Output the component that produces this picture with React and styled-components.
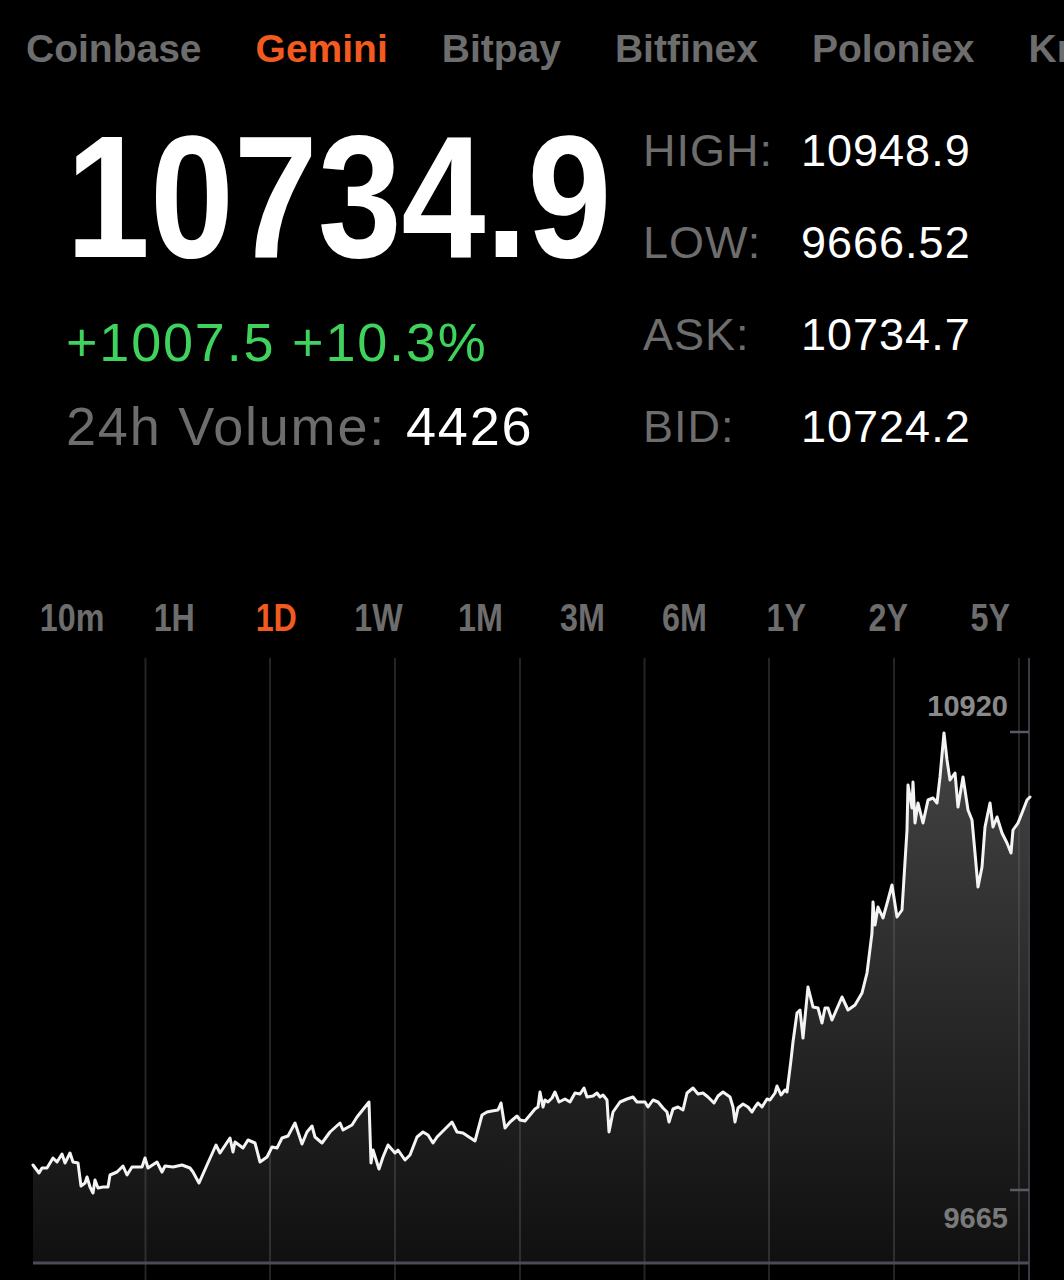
import React from 'react';
import styled, { createGlobalStyle } from 'styled-components';

const GlobalStyle = createGlobalStyle`
    html, body {
        margin: 0;
        padding: 0;
        background: #000;
    }
    body {
        font-family: "Liberation Sans", Arial, sans-serif;
        overflow: hidden;
    }
`;

const ORANGE = '#f25a1f';
const GRAY = '#6d6d6d';

const Page = styled.div`
    width: 1064px;
    height: 1280px;
    background: #000;
    overflow: hidden;
`;

const Exchanges = styled.div`
    display: flex;
    gap: 54px;
    padding: 24px 0 0 26px;
    white-space: nowrap;
    overflow: hidden;
`;

const Exchange = styled.div`
    font-size: 39px;
    line-height: 50px;
    font-weight: 700;
    color: ${p => (p.$active ? ORANGE : GRAY)};
`;

const Header = styled.div`
    display: grid;
    grid-template-columns: 577px 1fr;
    padding: 31px 0 0 66px;
`;

const Left = styled.div`
    padding-top: 4px;
`;

const Price = styled.div`
    font-size: 175px;
    line-height: 175px;
    font-weight: 700;
    color: #fff;
    margin-left: 0;
    transform: scaleX(0.862);
    transform-origin: left center;
    white-space: nowrap;
`;

const Line = styled.div`
    font-size: 54px;
    line-height: 84px;
    letter-spacing: 1.8px;
    white-space: nowrap;
    color: ${p => p.$color || GRAY};
`;

const Change = styled(Line)`
    margin-top: 16px;
`;

const Value = styled.span`
    color: #fff;
    margin-left: 20px;
`;

const Stats = styled.div`
    display: grid;
    grid-template-columns: 158px auto;
    grid-auto-rows: 92px;
    align-items: start;
    font-size: 45px;
    line-height: 92px;
    letter-spacing: 1px;
`;

const StatLabel = styled.div`
    color: ${GRAY};
`;

const StatValue = styled.div`
    color: #fff;
`;

const Ranges = styled.div`
    display: grid;
    grid-template-columns: repeat(10, 102px);
    margin: 115px 0 0 21px;
`;

const Range = styled.div`
    display: flex;
    justify-content: center;
    font-size: 38px;
    line-height: 60px;
    font-weight: 700;
    color: ${p => (p.$active ? ORANGE : GRAY)};
`;

const Narrow = styled.span`
    display: inline-block;
    transform: scaleX(0.85);
`;

const ChartBox = styled.div`
    margin-top: 10px;
    height: 622px;
`;

const exchanges = ['Coinbase', 'Gemini', 'Bitpay', 'Bitfinex', 'Poloniex', 'Kraken'];
const ranges = ['10m', '1H', '1D', '1W', '1M', '3M', '6M', '1Y', '2Y', '5Y'];
const stats = [
    ['HIGH:', '10948.9'],
    ['LOW:', '9666.52'],
    ['ASK:', '10734.7'],
    ['BID:', '10724.2'],
];

// traced from the 1D chart, page coordinates
const points = [
    [33,1165],[39,1173],[42,1168],[47,1168],[53,1158],[57,1162],[62,1154],[65,1163],[70,1153],[73,1162],
    [78,1163],[81,1186],[85,1183],[87,1177],[90,1187],[93,1193],[95,1180],[98,1188],[103,1187],[108,1187],
    [110,1175],[117,1172],[123,1166],[127,1175],[132,1167],[142,1167],[145,1158],[148,1168],[157,1162],
    [162,1172],[165,1166],[173,1167],[182,1165],[190,1168],[193,1172],[199,1183],[207,1165],[216,1145],
    [220,1153],[230,1138],[233,1152],[235,1142],[243,1148],[248,1140],[255,1143],[260,1162],[267,1157],
    [272,1147],[277,1148],[282,1138],[288,1136],[295,1123],[302,1144],[307,1132],[312,1126],[315,1137],
    [322,1143],[330,1132],[340,1123],[343,1130],[352,1125],[357,1117],[369,1102],[371,1163],[373,1150],
    [379,1169],[383,1157],[388,1145],[395,1153],[398,1150],[405,1160],[410,1155],[417,1137],[423,1132],
    [428,1135],[433,1143],[437,1137],[452,1122],[457,1132],[463,1133],[475,1141],[482,1115],[487,1112],
    [492,1111],[498,1110],[501,1103],[505,1128],[510,1122],[517,1116],[520,1120],[525,1121],[530,1115],
    [535,1109],[538,1107],[540,1092],[543,1107],[545,1100],[548,1102],[552,1098],[555,1092],[559,1102],
    [565,1099],[570,1102],[575,1093],[580,1094],[584,1088],[587,1097],[593,1096],[597,1093],[600,1097],
    [603,1095],[607,1100],[609,1132],[613,1112],[620,1102],[627,1099],[633,1097],[637,1102],[645,1102],
    [648,1107],[653,1100],[658,1102],[663,1108],[667,1112],[669,1122],[673,1109],[678,1107],[683,1110],
    [687,1093],[693,1088],[698,1094],[703,1093],[708,1097],[714,1103],[718,1096],[723,1092],[730,1097],
    [733,1107],[735,1122],[738,1108],[743,1104],[748,1107],[752,1112],[755,1107],[758,1103],[762,1107],
    [767,1099],[770,1100],[775,1093],[777,1086],[781,1095],[785,1090],[787,1092],[791,1060],[793,1042],
    [797,1013],[800,1010],[803,1038],[808,987],[813,1007],[818,1008],[822,1023],[825,1008],[828,1008],
    [832,1020],[842,997],[848,1010],[855,1005],[862,993],[867,973],[872,933],[873,902],[875,925],[878,907],
    [883,918],[888,900],[892,885],[897,917],[902,910],[907,830],[908,785],[912,808],[913,782],[915,823],
    [918,803],[923,823],[928,800],[933,798],[937,803],[940,777],[944,733],[947,760],[950,780],[955,773],
    [958,807],[963,777],[968,810],[972,820],[975,853],[978,887],[982,867],[985,827],[990,803],[993,827],
    [997,817],[1002,833],[1007,843],[1011,853],[1013,830],[1018,823],[1022,813],[1027,800],[1030,797],
];

const gridX = [145.5, 270, 395, 520, 644.5, 769, 894, 1019];

function PriceChart() {
    const line = points.map(([x, y], i) => `${i ? 'L' : 'M'}${x},${y}`).join(' ');
    const area = `M33,1263 ${line.replace('M', 'L')} L1030,1263 Z`;

    return (
        <svg width="1064" height="622" viewBox="0 658 1064 622" style={{ display: 'block' }}>
            <defs>
                <linearGradient id="fill" gradientUnits="userSpaceOnUse" x1="0" y1="730" x2="0" y2="1263">
                    <stop offset="0" stopColor="#444" />
                    <stop offset="0.55" stopColor="#272727" />
                    <stop offset="1" stopColor="#101010" />
                </linearGradient>
            </defs>
            <path d={area} fill="url(#fill)" />
            {gridX.map(x => (
                <line key={x} x1={x} y1="658" x2={x} y2="1280" stroke="rgba(110,110,125,0.32)" strokeWidth="2" />
            ))}
            <line x1="1029" y1="658" x2="1029" y2="1280" stroke="#3b3b46" strokeWidth="2" />
            <line x1="33" y1="1263" x2="1029" y2="1263" stroke="#4b4b56" strokeWidth="3" />
            <line x1="1010" y1="732" x2="1029" y2="732" stroke="#5a5a66" strokeWidth="2.5" />
            <line x1="1010" y1="1190" x2="1029" y2="1190" stroke="#5a5a66" strokeWidth="2.5" />
            <path d={line} fill="none" stroke="#f4f4f4" strokeWidth="3" strokeLinejoin="round" strokeLinecap="round" />
            <text
                x="1008"
                y="716"
                textAnchor="end"
                fontFamily="Liberation Sans, Arial, sans-serif"
                fontWeight="700"
                fontSize="29"
                fill="#8a8a8a"
            >
                10920
            </text>
            <text
                x="1008"
                y="1228"
                textAnchor="end"
                fontFamily="Liberation Sans, Arial, sans-serif"
                fontWeight="700"
                fontSize="29"
                fill="#7a7a7a"
            >
                9665
            </text>
        </svg>
    );
}

export default function App() {
    return (
        <>
            <GlobalStyle />
            <Page>
                <Exchanges>
                    {exchanges.map(name => (
                        <Exchange key={name} $active={name === 'Gemini'}>{name}</Exchange>
                    ))}
                </Exchanges>
                <Header>
                    <Left>
                        <Price>10734.9</Price>
                        <Change $color="#3fd25c">+1007.5 +10.3%</Change>
                        <Line>24h Volume:<Value>4426</Value></Line>
                    </Left>
                    <Stats>
                        {stats.map(([label, value]) => (
                            <React.Fragment key={label}>
                                <StatLabel>{label}</StatLabel>
                                <StatValue>{value}</StatValue>
                            </React.Fragment>
                        ))}
                    </Stats>
                </Header>
                <Ranges>
                    {ranges.map(r => (
                        <Range key={r} $active={r === '1D'}><Narrow>{r}</Narrow></Range>
                    ))}
                </Ranges>
                <ChartBox>
                    <PriceChart />
                </ChartBox>
            </Page>
        </>
    );
}
